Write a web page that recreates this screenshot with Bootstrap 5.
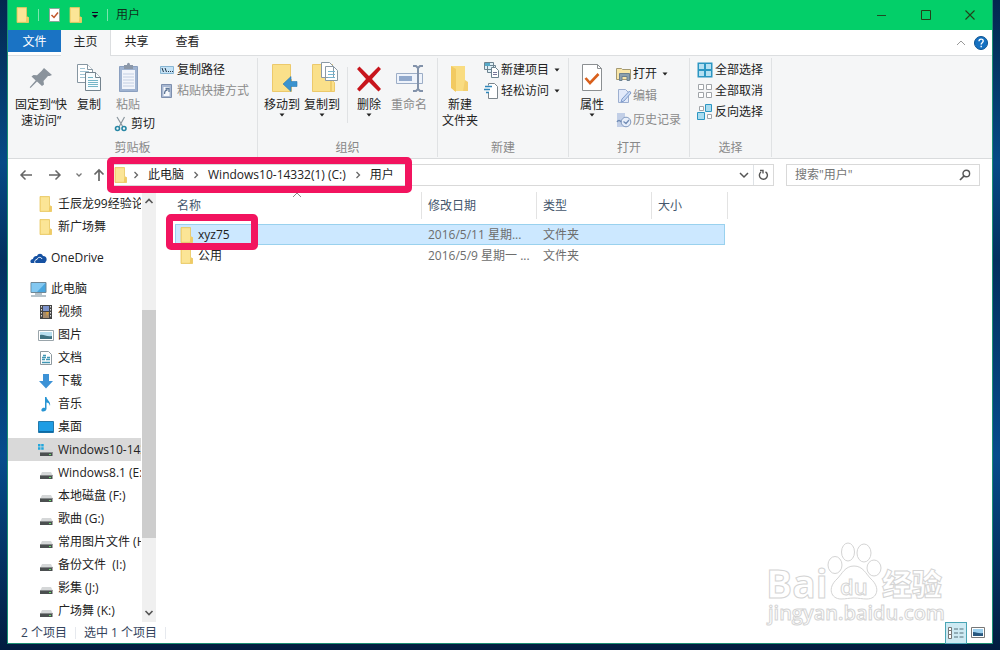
<!DOCTYPE html>
<html lang="zh-CN">
<head>
<meta charset="utf-8">
<meta name="viewport" content="width=device-width, initial-scale=1">
<title>用户</title>
<link rel="stylesheet" href="https://cdn.jsdelivr.net/npm/bootstrap@5.3.0/dist/css/bootstrap.min.css">
<script src="https://cdn.jsdelivr.net/npm/bootstrap@5.3.0/dist/js/bootstrap.bundle.min.js"></script>
<style>
body{font-family:"Open Sans","Noto Sans CJK SC",sans-serif;font-size:12px;line-height:16px;color:#222;background:linear-gradient(180deg,#03284f 0,#064a86 25%,#03305f 40%,#064c8c 70%,#021c3f 100%);}
a{color:inherit;text-decoration:none}
button{background:none;border:0;padding:0;color:inherit;font:inherit;white-space:nowrap}
svg{display:block;flex:none}
.desk{min-height:100vh;padding:0 7px 7px 7px}
.win{background:#fff;border:solid #1c8f72;border-width:0 1px 1px}
.titlebar{height:30px;background:#03cf69;color:#10301c}
.vline{width:1px;height:12px;background:#7be5ae}
.capbtn{width:44px;height:30px}
.tabs{height:26px;border-bottom:1px solid #dcdee0}
.tabs a{height:26px;line-height:24px;text-align:center;margin-bottom:-1px}
.tab-file{width:53px;background:#1a73c4;color:#fff;height:22px!important}
.tab-on{width:50px;background:#f5f6f7;border-right:1px solid #dcdee0}
.tab-off{width:51px}
.ribbon{height:103px;background:#f5f6f7;border-bottom:1px solid #d9dbdd}
.grp{border-right:1px solid #e0e2e4;margin:2px 0 1px;padding-top:1px}
.g1{width:250px}.g2{width:180px}.g3{width:131px}.g4{width:121px}.g5{width:82px}
.grp-name{color:#888;margin-bottom:1px}
.big{padding-top:3px;display:flex;flex-direction:column;align-items:center}
.big svg.pic{margin-bottom:3px}
.w36{width:36px}.w38{width:38px}.w40{width:40px}.w44{width:44px}.w58{width:58px}
.sm{height:21px;display:flex;align-items:center;gap:1px}
.sm.tall{height:24px}
.off{color:#8b8b8b}
.rsep{width:1px;height:56px;margin:8px 3px 0 5px;background:#e0e2e4}
.addr{height:33px;padding:5px 12px 0 11px}
.boxed{height:22px;border:1px solid #d9d9d9;background:#fff}
.nav-ic{width:88px;height:22px}
.mark-box{position:absolute;border:7px solid #f2145f;border-radius:5px;pointer-events:none;z-index:2}
.mark-path{left:-1px;top:-8px;width:305px;height:36px}
.mark-row{left:-10px;top:-11px;width:92px;height:36px}
.search{width:194px;margin-left:12px}
.search input{border:0;outline:0;background:none;min-width:0;padding:0 0 0 8px;color:#666;font:inherit}
.search input::placeholder{color:#757575;opacity:1}
.side{width:133px;margin-right:1px;overflow:hidden}
.side a{height:23px;display:flex;align-items:center;gap:4px;white-space:nowrap;padding-left:30px}
.side a.top{padding-left:22px}
.side a.here{background:#d9d9d9}
.sbar{width:14px;background:#f0f0f0}
.sbar .thumb{height:228px;margin-top:104px;background:#cdcdcd}
.files{width:553px;margin-left:19px;table-layout:fixed;border-collapse:separate;border-spacing:0}
.files th{font-weight:400;color:#44566c;height:27px;border-right:1px solid #e3e3e3;padding:0 0 0 6px}
.files th:first-child{padding-left:2px}
.files td{height:21px;padding:0 0 0 6px;color:#6d6d6d;white-space:nowrap}
.files td:first-child{padding-left:5px;color:#222}
.files .gap td{height:5px}
.files .sel td:not(.pad){background:#cce8ff;border:solid #99d1ee;border-width:1px 0}
.files .sel td:first-child{border-left-width:1px;padding-left:4px}
.files .sel td.last{border-right-width:1px}
.files td.pad{padding:0}
.sort{position:absolute;left:117px;top:0}
.status{height:21px;color:#33435c;padding:0 7px 0 13px}
.status .bar{width:1px;height:12px;margin:0 8px;background:#e6e9ee}
.view-on{width:22px;height:22px;background:#cdeaf3;border:1px solid #4aa5b5;display:flex;align-items:center;justify-content:center}
.wm{position:absolute;right:38px;bottom:-10px;pointer-events:none}
</style>
</head>
<body>
<svg width="0" height="0" class="position-absolute" aria-hidden="true">
<defs>
<symbol id="folder" viewBox="0 0 14 16"><path d="M1 .5h9.500v9l2 1v5H1z" fill="#f8dd82" stroke="#e8c661" stroke-width=".8"/><path d="M10.500 10h2v5.500h-3z" fill="#efcb66"/><path d="M2 1.500h8v13H2z" fill="#fbe596"/></symbol>
<symbol id="drive" viewBox="0 0 16 16"><path d="M4 7h9l1.500 3h-12z" fill="#d5d7d8"/><path d="M2 10h12.500v4H2z" fill="#4b4f50"/><path d="M2 10h12.500v1H2z" fill="#85898a"/><path d="M11 12h2v1h-2z" fill="#68e06c"/></symbol>
<symbol id="chev" viewBox="0 0 8 8"><path d="M2.500 1l3 3-3 3" fill="none" stroke="#666" stroke-width="1.300"/></symbol>
<symbol id="caret" viewBox="0 0 6 4"><path d="M.5.5h5L3 3.500z" fill="#222"/></symbol>
</defs>
</svg>
<div class="desk d-flex">
<div class="win flex-grow-1 d-flex flex-column">

<header class="titlebar d-flex align-items-center ps-2">
  <svg width="14" height="16"><use href="#folder"/></svg>
  <span class="vline ms-2"></span>
  <button class="ms-2" aria-label="属性"><svg width="14" height="16" viewBox="0 0 14 16"><path d="M2.500 1.500h10v13h-10z" fill="#fff" stroke="#8aa79a"/><path d="M4.500 8l2.500 2.500 4-5" fill="none" stroke="#c1562c" stroke-width="1.500"/></svg></button>
  <button class="ms-2" aria-label="新建文件夹"><svg width="14" height="16"><use href="#folder"/></svg></button>
  <button class="ms-1 px-1" aria-label="自定义"><svg width="8" height="8" viewBox="0 0 8 8"><path d="M1 1.500h6" stroke="#102"/><path d="M1 4h6L4 7z" fill="#102"/></svg></button>
  <span class="vline ms-1"></span>
  <span class="ms-2">用户</span>
  <div class="ms-auto d-flex">
    <button class="capbtn" aria-label="最小化"><svg class="mx-auto" width="10" height="10"><path d="M0 5.500h9" stroke="#1f4a23"/></svg></button>
    <button class="capbtn" aria-label="最大化"><svg class="mx-auto" width="11" height="11"><path d="M.5.5h9v9h-9z" fill="none" stroke="#24401a"/></svg></button>
    <button class="capbtn" aria-label="关闭"><svg class="mx-auto" width="10" height="10"><path d="M.5.5l9 9m0-9l-9 9" stroke="#24401a" stroke-width="1.100"/></svg></button>
  </div>
</header>

<nav class="tabs d-flex">
  <a href="#" class="tab-file">文件</a><a href="#" class="tab-on">主页</a><a href="#" class="tab-off">共享</a><a href="#" class="tab-off">查看</a>
  <div class="ms-auto d-flex align-items-center gap-2 pe-1">
    <button aria-label="折叠功能区"><svg width="10" height="8" viewBox="0 0 10 8"><path d="M1 6l4-4 4 4" fill="none" stroke="#999"/></svg></button>
    <button aria-label="帮助"><svg width="14" height="14" viewBox="0 0 14 14"><circle cx="7" cy="7" r="6.500" fill="#1671c1" stroke="#0c5290"/><path d="M5 5.300c0-3 4.200-2.800 4.200-.2C9.200 6.700 7.200 6.700 7.200 8.400M7.200 9.800v1.500" fill="none" stroke="#fff" stroke-width="1.400"/></svg></button>
  </div>
</nav>

<section class="ribbon d-flex">
  <div class="grp g1 d-flex flex-column">
    <div class="d-flex align-items-start flex-grow-1 ps-1">
      <button class="big w58"><svg class="pic" width="32" height="32" viewBox="0 0 32 32"><path d="M19 6l8 7-2.500 1-1.500 0-4.500 5 .5 3.500-2 1.500-5-4.500-6.500 6.500-.8-.8 6-6.700-4.200-4 2-1.500 3.500.3 4.500-4.300z" fill="#8a939c"/></svg><span>固定到“快<br>速访问”</span></button>
      <button class="big w38"><svg class="pic" width="32" height="32" viewBox="0 0 32 32"><g fill="#fff" stroke="#8696a2"><path d="M4.500 2.500h10l5 5v13h-15z"/><path d="M14.500 2.500v5h5" /></g><path d="M7 9.500h9M7 12.500h9M7 15.500h9M7 6.500h5" stroke="#a0c4d4"/><g fill="#f7fcfe" stroke="#74838e"><path d="M12.500 10.500h10l5 5v13h-15z"/><path d="M22.500 10.500v5h5"/></g><path d="M15 15.500h5M15 18.500h10M15 20.500h10M15 22.500h10M15 24.500h10" stroke="#74b6c8"/></svg><span>复制</span></button>
      <div class="d-flex flex-column align-items-start" style="width:50px">
        <button class="big w40 off"><svg class="pic" width="32" height="32" viewBox="0 0 32 32"><path d="M7.500 4.500h18v25h-18z" fill="#9fb3d1" stroke="#8ba0c0"/><path d="M10 8h13v19H10z" fill="#f2f5fb"/><path d="M11 12h11M11 15h11M11 18h11M11 21h11M11 24h11" stroke="#c3cfe2"/><path d="M12 3h3c0-3 3-3 3 0h3v4h-9z" fill="#8b97a8"/></svg><span>粘贴</span></button>
        <button class="sm ms-1"><svg width="18" height="18" viewBox="0 0 18 18"><path d="M5 2l6 10M12.500 2L7 12" stroke="#8b969e" stroke-width="1.200"/><g fill="none" stroke="#2787a5" stroke-width="1.600"><circle cx="5.500" cy="13.500" r="2"/><circle cx="12" cy="13.500" r="2"/></g></svg><span>剪切</span></button>
      </div>
      <div class="d-flex flex-column">
        <button class="sm"><svg width="18" height="16" viewBox="0 0 18 16"><path d="M2.500 4.500h13v7h-13z" fill="#c4e2f6" stroke="#87b5d3"/><path d="M4 6l1.500 4M7 6l1.500 4M10 9.500h1M12 9.500h1M14 9.500h1" stroke="#234" /></svg><span>复制路径</span></button>
        <button class="sm off"><svg width="18" height="16" viewBox="0 0 18 16"><path d="M3.500 1.500h10v13h-10z" fill="#a8b8d2" stroke="#7d8fae"/><path d="M5.500 4h6v9h-6z" fill="#f6f8fc"/><path d="M6.500 11c0-3 1-4 3-4M7.500 5.500H11V9" fill="none" stroke="#5f7898" stroke-width="1.300"/></svg><span>粘贴快捷方式</span></button>
      </div>
    </div>
    <div class="grp-name text-center">剪贴板</div>
  </div>

  <div class="grp g2 d-flex flex-column">
    <div class="d-flex align-items-start flex-grow-1 ps-1">
      <button class="big w40"><svg class="pic" width="32" height="32" viewBox="0 0 32 32"><path d="M6.500 2.500h18v14l1 1v12h-19z" fill="#fae08a" stroke="#ecc96b"/><path d="M31 19.500v5h-6v5l-8-7.500 8-7.500v5z" fill="#3a93cf" stroke="#2d79b0" stroke-width=".6"/></svg><span>移动到</span><svg width="6" height="4"><use href="#caret"/></svg></button>
      <button class="big w40"><svg class="pic" width="32" height="32" viewBox="0 0 32 32"><path d="M6.500 2.500h20v16l2 2v9h-22z" fill="#fae08a" stroke="#ecc96b"/><path d="M25 19v10" stroke="#e2b94f"/><g fill="#fff" stroke="#8b99a4"><path d="M15.500.5h8l4 4v11h-12zM19.500 4.500h8l4 4v10h-12z"/></g><path d="M22 9.500h7M22 12.500h7M22 15.500h7" stroke="#76b5d0"/></svg><span>复制到</span><svg width="6" height="4"><use href="#caret"/></svg></button>
      <span class="rsep"></span>
      <button class="big w36"><svg class="pic" width="32" height="32" viewBox="0 0 32 32"><path d="M6.500 4.500L16 14l9.500-9.500 2.500 2.500-9 10 9 10-2.500 2.500L16 20l-9.500 9.500L4 27l9-10-9-10z" fill="#c8151d"/></svg><span>删除</span><svg width="6" height="4"><use href="#caret"/></svg></button>
      <button class="big w44 off"><svg class="pic" width="32" height="32" viewBox="0 0 32 32"><path d="M3.500 11.500h26v10h-26z" fill="#eef3fb" stroke="#9cadc6"/><path d="M6 14h13v5H6z" fill="#91a9cc"/><path d="M20 4h3l2 2 2-2h3M25 5v22M20 29h3l2-2 2 2h3" fill="none" stroke="#8292aa" stroke-width="2"/></svg><span>重命名</span></button>
    </div>
    <div class="grp-name text-center">组织</div>
  </div>

  <div class="grp g3 d-flex flex-column">
    <div class="d-flex align-items-start flex-grow-1">
      <button class="big w44"><svg class="pic" width="32" height="32" viewBox="0 0 32 32"><path d="M7 4h14v15l3 2v8H10z" fill="#f9dc81"/><path d="M7 4l5 3v23l-5-4z" fill="#f2ca61"/><path d="M21 18l3 2v9h-5z" fill="#f3cf6e"/></svg><span>新建<br>文件夹</span></button>
      <div class="d-flex flex-column">
        <button class="sm"><svg width="18" height="18" viewBox="0 0 18 18"><g fill="#dff0f8" stroke="#6d8390"><path d="M2.500 1.500h9v7h-9zM5.500 4.500h8v7h-8z"/><path d="M9.500 6.500h4l3 3v7h-7z" fill="#fff"/></g><path d="M11 11.500h4M11 13.500h4" stroke="#779"/><path d="M3 2h5v3H3z" fill="#57aac9"/></svg><span>新建项目</span><svg class="ms-1" width="6" height="4"><use href="#caret"/></svg></button>
        <button class="sm"><svg width="18" height="18" viewBox="0 0 18 18"><path d="M6.500 3.500V1.500h6l3 3v12h-9V11" fill="#fff" stroke="#7b858c"/><path d="M3 4.500h7M2 7.500h6M4 10.500h3" stroke="#3087ba" stroke-width="1.500"/></svg><span>轻松访问</span><svg class="ms-1" width="6" height="4"><use href="#caret"/></svg></button>
      </div>
    </div>
    <div class="grp-name text-center">新建</div>
  </div>

  <div class="grp g4 d-flex flex-column">
    <div class="d-flex align-items-start flex-grow-1" style="padding-left:3px">
      <button class="big w40"><svg class="pic" width="32" height="32" viewBox="0 0 32 32"><path d="M6.500 2.500h15l4 4v22h-19z" fill="#fff" stroke="#8b8f92"/><path d="M21.500 2.500v4h4" fill="none" stroke="#8b8f92"/><path d="M9.500 16l4.500 5 8.500-9" fill="none" stroke="#d9601c" stroke-width="2.600"/></svg><span>属性</span><svg width="6" height="4"><use href="#caret"/></svg></button>
      <div class="d-flex flex-column pt-1 ms-1">
        <button class="sm"><svg width="16" height="16" viewBox="0 0 16 16"><path d="M.5 2.500h5l1 1h8v10H.5z" fill="#f9e6a8" stroke="#a59a72"/><path d="M3.500 7.500h10v7h-2.500v-4H6v4H3.500z" fill="#8ba0ae" stroke="#6b8190"/></svg><span>打开</span><svg class="ms-1" width="6" height="4"><use href="#caret"/></svg></button>
        <button class="sm tall off"><svg width="16" height="16" viewBox="0 0 16 16"><path d="M2.500 1.500h7l3 3v10h-10z" fill="#e2eafa" stroke="#9dafd0"/><path d="M13.500 3L6 11l-1 3 3-1 7-8z" fill="#c8d8f3" stroke="#7f9ccc"/></svg><span>编辑</span></button>
        <button class="sm tall off"><svg width="16" height="16" viewBox="0 0 16 16"><path d="M1 1h8v9l2 2v3H1z" fill="#c2cfe7"/><circle cx="10" cy="10" r="4.800" fill="#e7eefa" stroke="#839bc0"/><path d="M7.500 9.500l2.500 2 3-3.500M1 10c1-2 3-2 4 0" fill="none" stroke="#718cb5" stroke-width="1.300"/></svg><span>历史记录</span></button>
      </div>
    </div>
    <div class="grp-name text-center">打开</div>
  </div>

  <div class="grp g5 d-flex flex-column">
    <div class="d-flex flex-column align-items-start flex-grow-1" style="padding-left:7px">
      <button class="sm"><svg width="17" height="16" viewBox="0 0 17 16"><path d="M.5.500h15v15h-15z" fill="#2c96c2"/><path d="M2 2h5v5H2zM9 2h5v5H9zM2 9h5v5H2zM9 9h5v5H9z" fill="#b5e0f2"/></svg><span>全部选择</span></button>
      <button class="sm"><svg width="17" height="16" viewBox="0 0 17 16"><path d="M1.500 1.500h5v5h-5zM9.500 1.500h5v5h-5zM1.500 9.500h5v5h-5zM9.500 9.500h5v5h-5z" fill="#fff" stroke="#a0a4a8"/></svg><span>全部取消</span></button>
      <button class="sm"><svg width="17" height="16" viewBox="0 0 17 16"><path d="M2.500 2.500h4v4h-4zM10.500 10.500h4v4h-4z" fill="#fff" stroke="#a0a4a8"/><path d="M8.500.5h6v7h-6zM.5 8.500h7v7h-7z" fill="#a9dcf0" stroke="#2c96c2"/></svg><span>反向选择</span></button>
    </div>
    <div class="grp-name text-center">选择</div>
  </div>
</section>

<div class="addr d-flex">
  <div class="nav-ic d-flex align-items-center">
    <button aria-label="后退"><svg width="16" height="16" viewBox="0 0 16 16"><path d="M13 8H2M6.500 3.500L2 8l4.500 4.500" fill="none" stroke="#666" stroke-width="1.500"/></svg></button>
    <button class="ms-2 ps-1" aria-label="前进"><svg width="16" height="16" viewBox="0 0 16 16"><path d="M2 8h11M8.500 3.500L13 8l-4.500 4.500" fill="none" stroke="#666" stroke-width="1.500"/></svg></button>
    <button class="ms-2 ps-1" aria-label="最近"><svg width="8" height="8" viewBox="0 0 8 8"><path d="M1.500 2.500L4 5l2.500-2.500" fill="none" stroke="#777" stroke-width="1.300"/></svg></button>
    <button class="ms-2" aria-label="向上"><svg width="16" height="16" viewBox="0 0 16 16"><path d="M8 14V3M3.500 7.500L8 3l4.500 4.500" fill="none" stroke="#666" stroke-width="1.700"/></svg></button>
  </div>
  <div class="boxed flex-grow-1 d-flex align-items-center position-relative">
    <div class="d-flex align-items-center flex-grow-1" style="padding-left:6px">
      <svg width="14" height="16"><use href="#folder"/></svg>
      <svg class="ms-1" width="8" height="8"><use href="#chev"/></svg>
      <a href="#" class="ms-2">此电脑</a>
      <svg class="ms-2" width="8" height="8"><use href="#chev"/></svg>
      <a href="#" class="ms-2">Windows10-14332(1) (C:)</a>
      <svg class="ms-2" width="8" height="8"><use href="#chev"/></svg>
      <a href="#" class="ms-2">用户</a>
    </div>
    <button class="me-1" aria-label="历史"><svg width="10" height="8" viewBox="0 0 10 8"><path d="M1 2l4 4 4-4" fill="none" stroke="#555" stroke-width="1.500"/></svg></button>
    <button class="border-start h-100 px-1" aria-label="刷新"><svg width="11" height="12" viewBox="0 0 11 12"><path d="M7.500 2.800A4 4 0 1 1 3 3M2 1.500h3v3" fill="none" stroke="#555" stroke-width="1.400"/></svg></button>
    <span class="mark-box mark-path"></span>
  </div>
  <div class="boxed search d-flex align-items-center">
    <input class="flex-grow-1" type="text" placeholder="搜索&quot;用户&quot;" aria-label="搜索">
    <svg class="me-2" width="12" height="12" viewBox="0 0 12 12"><circle cx="7.300" cy="4.500" r="3.300" fill="none" stroke="#555" stroke-width="1.400"/><path d="M5 7L1 11" stroke="#555" stroke-width="1.700"/></svg>
  </div>
</div>

<div class="d-flex flex-grow-1">
  <nav class="side">
    <a href="#"><svg width="16" height="16"><use href="#folder"/></svg>壬辰龙99经验论坛</a>
    <a href="#"><svg width="16" height="16"><use href="#folder"/></svg>新广场舞</a>
    <a href="#" class="top mt-2"><svg width="17" height="16" viewBox="0 0 17 16"><path d="M1 13c-1.500-2 0-4 2-4 0-2 2-3.500 4-3 1-3 5-3 6 0 3 0 4 2 3.500 4.500L15 13z" fill="#1551a2"/><path d="M5 13c-1-2 .5-3.500 2-3.500C7.500 7 11 6.500 12 9" fill="none" stroke="#fff"/></svg>OneDrive</a>
    <a href="#" class="top mt-2"><svg width="17" height="16" viewBox="0 0 17 16"><path d="M1 1.500h15v10H1z" fill="#48a6df" stroke="#6f8796"/><path d="M1.500 2h14L7 11H1.500z" fill="#83c8f1"/><path d="M5 13h7M1 15h15" stroke="#6f8796"/></svg>此电脑</a>
    <a href="#"><svg width="16" height="16" viewBox="0 0 16 16"><path d="M2 1h12v14H2z" fill="#444"/><path d="M5 2h6v5H5z" fill="#7d93cc"/><path d="M5 8h6v6H5z" fill="#a58a6a"/><path d="M8 8h3l-2 4z" fill="#dba33e"/><path d="M3.500 2v12M12.500 2v12" stroke="#ddd" stroke-dasharray="1.500 1.500"/></svg>视频</a>
    <a href="#"><svg width="16" height="16" viewBox="0 0 16 16"><path d="M.5 3.500h15v10H.5z" fill="#fff" stroke="#9aa5ab"/><path d="M2 5h12v7H2z" fill="#b8dff0"/><path d="M2 8c4-1 6 2 12 1v3H2z" fill="#3f7282"/></svg>图片</a>
    <a href="#"><svg width="16" height="16" viewBox="0 0 16 16"><path d="M2.500 1.500h8l3 3v10h-11z" fill="#fff" stroke="#8d999f"/><path d="M4 7.500h4M9 7.500h3M4 9.500h3M8 9.500h4M4 12.500h8M5 5.500h3" stroke="#4197b5" stroke-width="1.300"/></svg>文档</a>
    <a href="#"><svg width="16" height="16" viewBox="0 0 16 16"><path d="M5 1h6v7h4l-7 7.500L1 8h4z" fill="#3c92d6"/></svg>下载</a>
    <a href="#"><svg width="16" height="16" viewBox="0 0 16 16"><path d="M7 1h1.500c0 3 4.500 4 3.500 9-.5-2.500-2-3.500-3.500-3.500V13c-1 3.500-6 3-5 .5.500-1.500 2-2 3.500-1.500z" fill="#2794d3"/></svg>音乐</a>
    <a href="#"><svg width="16" height="16" viewBox="0 0 16 16"><path d="M.5 2.500h15v11H.5z" fill="#1e9de4" stroke="#2479aa"/><path d="M1 12h14v1.500H1z" fill="#0b6aa5"/></svg>桌面</a>
    <a href="#" class="here"><svg width="16" height="16" viewBox="0 0 16 16"><use href="#drive"/><path d="M0 2h2.500v2.500H0zM3.200 2h2.500v2.500H3.200zM0 5.200h2.500v2.500H0zM3.200 5.200h2.500v2.500H3.200z" fill="#23a7dc"/></svg>Windows10-14332(1) (C:)</a>
    <a href="#"><svg width="16" height="16"><use href="#drive"/></svg>Windows8.1 (E:)</a>
    <a href="#"><svg width="16" height="16"><use href="#drive"/></svg>本地磁盘 (F:)</a>
    <a href="#"><svg width="16" height="16"><use href="#drive"/></svg>歌曲 (G:)</a>
    <a href="#"><svg width="16" height="16"><use href="#drive"/></svg>常用图片文件 (H:)</a>
    <a href="#"><svg width="16" height="16"><use href="#drive"/></svg>备份文件&nbsp; (I:)</a>
    <a href="#"><svg width="16" height="16"><use href="#drive"/></svg>影集 (J:)</a>
    <a href="#"><svg width="16" height="16"><use href="#drive"/></svg>广场舞 (K:)</a>
  </nav>
  <div class="sbar d-flex flex-column">
    <svg class="mt-1 mx-auto" width="10" height="10" viewBox="0 0 10 10"><path d="M1.500 7L5 3.500 8.500 7" fill="none" stroke="#555" stroke-width="1.600"/></svg>
    <div class="thumb"></div>
    <svg class="mt-auto mb-1 mx-auto" width="10" height="10" viewBox="0 0 10 10"><path d="M1.500 3L5 6.500 8.500 3" fill="none" stroke="#555" stroke-width="1.600"/></svg>
  </div>
  <main class="flex-grow-1 position-relative">
    <table class="files">
      <colgroup><col style="width:247px"><col style="width:115px"><col style="width:115px"><col style="width:73px"><col style="width:3px"></colgroup>
      <thead><tr><th class="position-relative">名称<svg class="sort" width="10" height="6" viewBox="0 0 10 6"><path d="M1 5l4-4 4 4" fill="none" stroke="#888"/></svg></th><th>修改日期</th><th>类型</th><th colspan="2">大小</th></tr></thead>
      <tbody>
        <tr class="gap"><td colspan="5"></td></tr>
        <tr class="sel"><td class="position-relative"><span class="d-flex align-items-center gap-1"><svg width="14" height="16"><use href="#folder"/></svg>xyz75</span><span class="mark-box mark-row"></span></td><td>2016/5/11 星期...</td><td>文件夹</td><td class="last"></td><td class="pad"></td></tr>
        <tr><td><span class="d-flex align-items-center gap-1"><svg width="14" height="16"><use href="#folder"/></svg>公用</span></td><td>2016/5/9 星期一 ...</td><td>文件夹</td><td></td><td class="pad"></td></tr>
      </tbody>
    </table>
    <svg class="wm" width="190" height="92" viewBox="0 0 190 92" font-family="Open Sans, Noto Sans CJK SC, sans-serif" fill="#fff" stroke="#d4d4d4" stroke-width="1">
      <text x="2" y="58" font-weight="700" font-size="39">Bai</text>
      <ellipse cx="71" cy="25" rx="7" ry="8.500"/><ellipse cx="84" cy="12" rx="6.500" ry="9"/><ellipse cx="100" cy="13" rx="7" ry="9"/><ellipse cx="110" cy="28" rx="7" ry="8"/>
      <path d="M90 26c9 0 12 8 17 13 10 9 6 20-4 20-5 0-8-1-13-1s-8 1-13 1c-10 0-14-11-4-20 5-5 8-13 17-13z"/>
      <text x="76" y="55" font-weight="600" font-size="22">du</text>
      <text x="118" y="55" font-weight="900" font-size="30">经验</text>
      <text x="4" y="80" font-size="20" font-weight="600">jingyan.baidu.com</text>
    </svg>
  </main>
</div>

<footer class="status d-flex align-items-center">
  <span>2 个项目</span><span class="bar"></span><span>选中 1 个项目</span><span class="bar"></span>
  <div class="ms-auto d-flex align-items-center gap-1">
    <button class="view-on" aria-label="详细信息"><svg width="16" height="14" viewBox="0 0 16 14"><path d="M.5 1.500h3v3h-3zM.5 4.500h3v4h-3zM.5 8.500h3v4h-3z" fill="#fff" stroke="#777"/><path d="M6 3h4M11.500 3h4M6 7h4M11.500 7h4M6 11h4M11.500 11h4" stroke="#54707a"/></svg></button>
    <button aria-label="大图标"><svg width="14" height="12" viewBox="0 0 14 12"><path d="M.5.500h13v10H.5z" fill="#fff" stroke="#777"/><path d="M2 2h10v7H2z" fill="#9cd0ee"/><path d="M2 5c4 0 6 2 10 1v3H2z" fill="#28577e"/></svg></button>
  </div>
</footer>
</div>
</div>
</body>
</html>
